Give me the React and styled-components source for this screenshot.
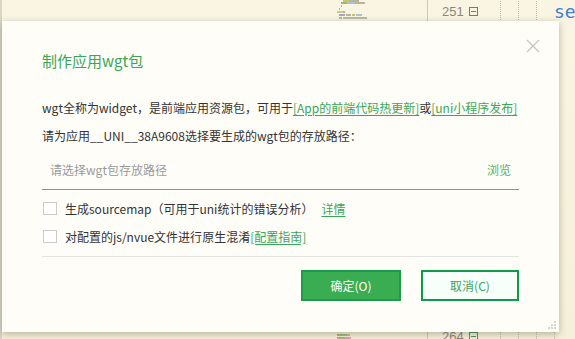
import React from "react"
import styled, { createGlobalStyle } from "styled-components"

const GlobalStyle = createGlobalStyle`
  html, body {
    margin: 0;
    padding: 0;
    overflow: hidden;
  }
  body {
    background: #f7f2dd;
    font-family: "Noto Sans CJK SC", "Noto Sans", sans-serif;
  }
`

const Screen = styled.div`
  position: relative;
  width: 575px;
  height: 339px;
  overflow: hidden;
`

/* editor behind the dialog */

const Editor = styled.div`
  display: flex;
  height: 339px;
  background: linear-gradient(180deg, #f9f5e2 0%, #f5f0d9 100%);
`

const LeftEdge = styled.div`
  flex-shrink: 0;
  width: 2px;
  background: #d9d6c8;
`

const MapArea = styled.div`
  flex-shrink: 0;
  width: 426px;
  display: flex;
  padding-left: 335px;
  box-sizing: border-box;
  border-right: 1px solid #d9c89d;
`

const Code = styled.div`
  flex-shrink: 0;
  display: flex;
  flex-direction: column;
  margin-top: -1px;
`

const Line = styled.div`
  display: flex;
  align-items: center;
  height: 25px;
`

const Num = styled.span`
  width: 40px;
  padding-left: 14px;
  box-sizing: border-box;
  font-family: "Liberation Sans", sans-serif;
  font-size: 13px;
  color: #8c8778;
`

const Fold = styled.span`
  width: 7px;
  height: 7px;
  border: 1px solid #3f9a5f;
  margin-left: 1px;
  margin-right: 22px;
  display: flex;
  align-items: center;
  justify-content: center;
  visibility: ${({ $show }) => ($show ? "visible" : "hidden")};
  &::after {
    content: "";
    width: 5px;
    height: 1px;
    background: #3f9a5f;
  }
`

const Guide = styled.span`
  width: ${({ $w }) => $w || 18}px;
  height: 25px;
  border-left: 1px dotted #bdb8a5;
  box-sizing: border-box;
`

const Word = styled.span`
  font-family: "DejaVu Sans Mono", monospace;
  font-size: 18px;
  color: #3b7fd6;
`

/* dialog */

const Dialog = styled.div`
  position: absolute;
  left: 2px;
  top: 21px;
  width: 557px;
  height: 311px;
  box-sizing: border-box;
  background: #fffdf8;
  box-shadow: 0 2px 7px rgba(60, 55, 35, 0.35);
  padding: 30px 40px 0;
  color: #333;
  font-size: 12px;
`

const Close = styled.button`
  position: absolute;
  right: 19px;
  top: 18px;
  width: 14px;
  height: 14px;
  padding: 0;
  border: 0;
  background: none;
  cursor: pointer;
`

const Title = styled.h1`
  margin: 0;
  font-size: 15px;
  font-weight: normal;
  line-height: 20px;
  color: #3aa655;
`

const Desc = styled.div`
  margin-top: 23px;
  line-height: 28px;
  white-space: nowrap;
`

const Link = styled.a`
  color: #3aa65a;
  text-decoration: underline;
  text-underline-offset: 2px;
  cursor: pointer;
`

const PathRow = styled.div`
  display: flex;
  align-items: center;
  justify-content: space-between;
  height: 37px;
  margin-top: 3px;
  padding: 0 8px 4px 8px;
  box-sizing: border-box;
  border-bottom: 1px solid #3ec462;
`

const Placeholder = styled.span`
  color: #9a9a9a;
`

const Browse = styled.span`
  color: #4db36a;
  cursor: pointer;
`

const Options = styled.div`
  margin-top: 4px;
  padding-bottom: 6px;
  border-bottom: 1px solid #e3e3e0;
`

const Option = styled.label`
  display: flex;
  align-items: center;
  height: 28px;
  white-space: nowrap;
`

const Box = styled.span`
  width: 12px;
  height: 11px;
  border: 1px solid #cbcbcb;
  background: #fff;
  margin-left: 1px;
  margin-right: 8px;
`

const Gap = styled.span`
  width: 8px;
`

const Actions = styled.div`
  display: flex;
  justify-content: flex-end;
  gap: 20px;
  margin-top: 13px;
`

const Button = styled.button`
  width: ${({ $w }) => $w}px;
  height: 31px;
  box-sizing: border-box;
  font-family: inherit;
  font-size: 12px;
  border: 2px solid ${({ $primary }) => ($primary ? "#1a9c4a" : "#0c9b4a")};
  background: ${({ $primary }) => ($primary ? "#3aac52" : "#f6fff9")};
  color: ${({ $primary }) => ($primary ? "#fff" : "#3f9f5a")};
  cursor: pointer;
`

const Grip = styled.svg`
  position: absolute;
  right: 2px;
  bottom: 2px;
`

const lines = Array.from({ length: 14 }, (_, i) => 251 + i)

function Minimap() {
  return (
    <svg width="32" height="339" viewBox="0 0 32 339">
      <rect x="6" y="0" width="6" height="2" fill="#c8c46a" />
      <rect x="12" y="0" width="10" height="2" fill="#b9b49c" />
      <rect x="4" y="2" width="6" height="2" fill="#9dba7c" />
      <rect x="10" y="2" width="8" height="2" fill="#a8c4d6" />
      <rect x="18" y="2" width="10" height="2" fill="#b9b49c" />
      <rect x="4" y="5" width="1" height="2" fill="#b9b49c" />
      <rect x="2" y="8" width="1" height="2" fill="#b9b49c" />
      <rect x="0" y="11" width="6" height="2" fill="#d6c48e" />
      <rect x="6" y="11" width="2" height="2" fill="#b9b49c" />
      <rect x="2" y="14" width="6" height="2" fill="#a6a6cc" />
      <rect x="9" y="14" width="5" height="2" fill="#b9b49c" />
      <rect x="15" y="14" width="3" height="2" fill="#c8c46a" />
      <rect x="19" y="14" width="6" height="2" fill="#a8c4d6" />
      <rect x="2" y="17" width="3" height="2" fill="#b9b49c" />
      <rect x="6" y="17" width="24" height="2" fill="#bcb8a6" />
      <rect x="0" y="334" width="10" height="2" fill="#9dba7c" />
      <rect x="10" y="334" width="3" height="2" fill="#c8c46a" />
      <rect x="0" y="337" width="8" height="2" fill="#9dba7c" />
      <rect x="8" y="337" width="6" height="2" fill="#d9a3b8" />
    </svg>
  )
}

export default function App() {
  return (
    <Screen>
      <GlobalStyle />
      <Editor>
        <LeftEdge />
        <MapArea>
          <Minimap />
        </MapArea>
        <Code>
          {lines.map((n, i) => (
            <Line key={n}>
              <Num>{n === 251 || n === 264 ? n : ""}</Num>
              <Fold $show={n === 251 || n === 264} />
              <Guide />
              <Guide />
              <Guide />
              {n === 251 ? <Word>set</Word> : <Guide $w={36} />}
              {i > 1 && <Guide />}
            </Line>
          ))}
        </Code>
      </Editor>

      <Dialog>
        <Close aria-label="close">
          <svg width="14" height="14" viewBox="0 0 14 14">
            <path d="M1 1 L13 13 M13 1 L1 13" stroke="#c4c4c4" strokeWidth="1.2" fill="none" />
          </svg>
        </Close>
        <Title>制作应用wgt包</Title>
        <Desc>
          wgt全称为widget，是前端应用资源包，可用于<Link>[App的前端代码热更新]</Link>或<Link>[uni小程序发布]</Link>
          <br />
          请为应用__UNI__38A9608选择要生成的wgt包的存放路径：
        </Desc>
        <PathRow>
          <Placeholder>请选择wgt包存放路径</Placeholder>
          <Browse>浏览</Browse>
        </PathRow>
        <Options>
          <Option>
            <Box />
            生成sourcemap（可用于uni统计的错误分析）<Gap />
            <Link>详情</Link>
          </Option>
          <Option>
            <Box />
            对配置的js/nvue文件进行原生混淆<Link>[配置指南]</Link>
          </Option>
        </Options>
        <Actions>
          <Button $primary $w={100}>确定(O)</Button>
          <Button $w={98}>取消(C)</Button>
        </Actions>
        <Grip width="10" height="10" viewBox="0 0 10 10">
          <rect x="7" y="1" width="2" height="2" fill="#d4d4d4" />
          <rect x="4" y="4" width="2" height="2" fill="#d4d4d4" />
          <rect x="7" y="4" width="2" height="2" fill="#d4d4d4" />
          <rect x="1" y="7" width="2" height="2" fill="#d4d4d4" />
          <rect x="4" y="7" width="2" height="2" fill="#d4d4d4" />
          <rect x="7" y="7" width="2" height="2" fill="#d4d4d4" />
        </Grip>
      </Dialog>
    </Screen>
  )
}
